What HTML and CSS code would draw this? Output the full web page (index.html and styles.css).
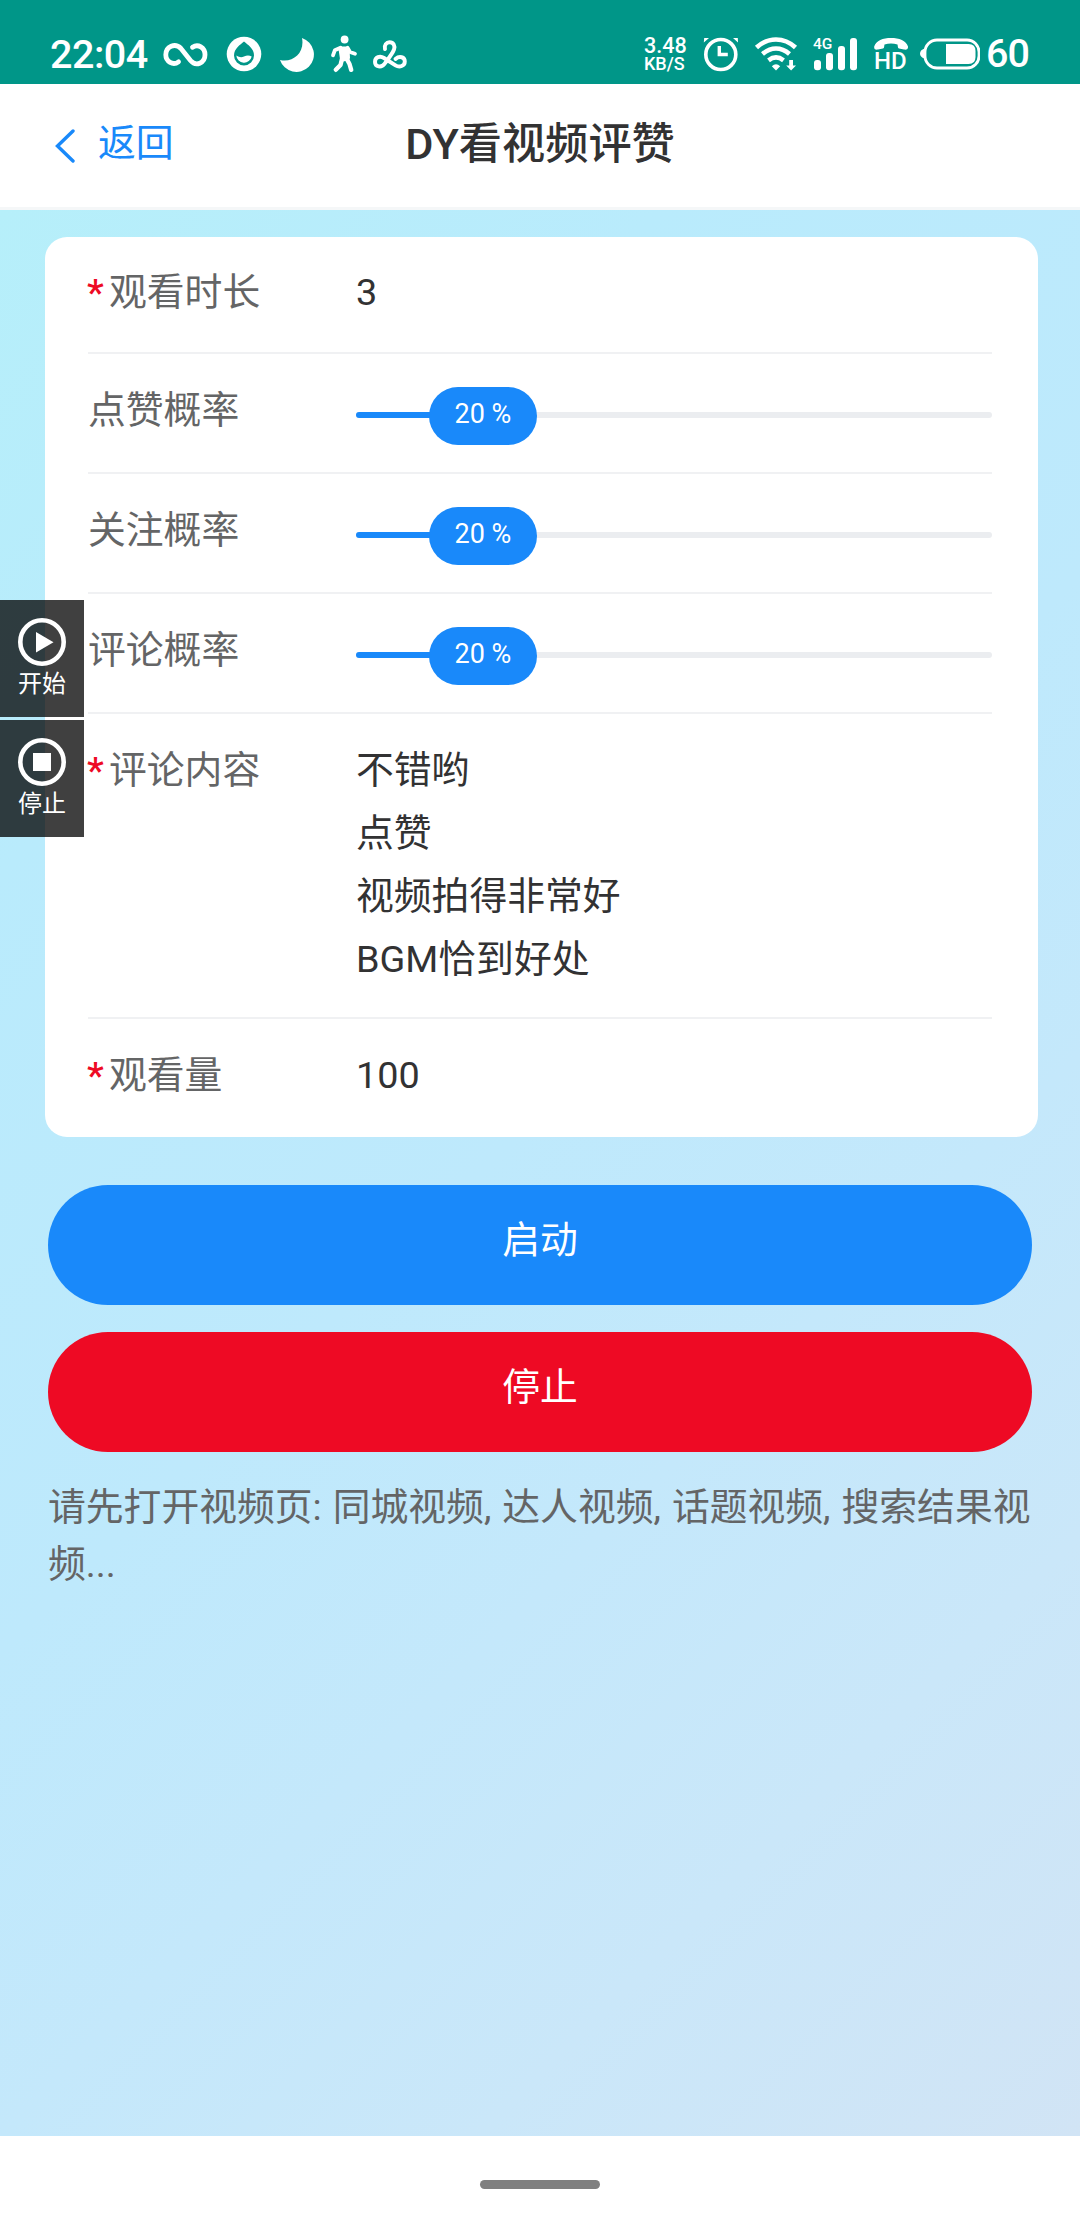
FILE: index.html
```html
<!DOCTYPE html>
<html lang="zh-CN">
<head>
<meta charset="utf-8">
<title>DY看视频评赞</title>
<link rel="stylesheet" href="styles.css">
</head>
<body>
<div class="status">
  <div class="status-left">
    <span class="clock">22:04</span>
    <svg class="i-inf" width="46" height="36" viewBox="162 36 46 36" fill="none" stroke="#fff" stroke-width="4.800" stroke-linecap="round"><path d="M178.500 61.800C173 66 165.800 61.500 165.800 54.800C165.800 46.500 175 42.500 181 48.500L190.500 60.500C196 67 205 63 205 54.800C205 47.500 198 43.500 192.500 47.300"/></svg>
    <svg class="i-drop" width="36" height="36" viewBox="225.500 36 36 36"><circle cx="243.500" cy="54" r="17.300" fill="#fff"/><path d="M243.500 41.500C247.500 45 253.500 48.500 253.500 55.500A10 10 0 0 1 233.500 55.500C233.500 48.500 239.500 45 243.500 41.500Z" fill="#009688"/><path d="M235.800 55.500C239 57.500 241 57.600 243.500 56.500C246.500 55 249 55.300 251.200 56.500A7.800 7.800 0 0 1 235.800 55.500Z" fill="#fff"/></svg>
    <svg class="i-moon" width="36" height="36" viewBox="279 36 36 36"><path d="M302 38A17.400 17.400 0 1 1 280 60C293 63 305 53 302 38Z" fill="#fff"/></svg>
    <svg class="i-walk" width="28" height="38" viewBox="330 35 28 38" fill="none" stroke="#fff" stroke-linecap="round" stroke-linejoin="round"><circle cx="344.600" cy="39.500" r="3.900" fill="#fff" stroke="none"/><path d="M341 49L347 49L347.500 58L342.500 59Z" fill="#fff" stroke-width="5"/><path d="M340.500 47.800L334.800 50.300L333 55.300M347.500 47.800L350 52L355 53.700" stroke-width="3.800"/><path d="M342 59L340.500 65L335.800 69.800M346.500 58.500L349.500 64L351.200 69.800" stroke-width="4.400"/></svg>
    <svg class="i-loop" width="36" height="34" viewBox="373 38 36 34" fill="none" stroke="#fff" stroke-width="3.900" stroke-linecap="round" stroke-linejoin="round"><path d="M386 49C385 45 387.500 42.300 390.500 42.300C394.500 42.300 396.300 46 395 49.500C393.300 54 389.500 58.500 385.500 63.800C382.500 68 376 67 376 62C376 57 381 55.500 385 58L396.500 65.300C400.500 67.800 405.800 66 405.800 61.500C405.800 57 400.500 55.500 396.500 59"/></svg>
  </div>
  <div class="status-right">
    <div class="rate"><span class="rate-n">3.48</span><span class="rate-u">KB/S</span></div>
    <svg class="i-alarm" width="36" height="36" viewBox="703 36 36 36" fill="none" stroke="#fff"><circle cx="720.800" cy="54.500" r="15" stroke-width="3.600"/><path d="M719.300 46V54.500H727.800" stroke-width="3.400"/><path d="M703.800 42.500L704.200 38H709ZM738 42.500L737.800 38H733Z" fill="#fff" stroke="none"/></svg>
    <svg class="i-wifi" width="44" height="36" viewBox="754 36 44 36" fill="none" stroke="#fff" stroke-width="4.600"><path d="M756.500 47.500C768 36.800 784 36.800 795.500 47.500M762.500 54C771 46.800 781 46.800 789.500 54M768.500 60.300C773.500 56.500 778.500 56.500 783.500 60.300"/><path d="M776 70.500L771.800 66.200Q776 62.500 780.200 66.200Z" fill="#fff" stroke="none"/><path d="M789.200 60H793V65.500H796L791.100 70.500L786.200 65.500H789.200Z" fill="#fff" stroke="none"/></svg>
    <div class="signal"><span class="net">4G</span><svg width="44" height="34" viewBox="814 37 44 34"><g fill="#fff"><rect x="814" y="60" width="7" height="10.300" rx="3"/><rect x="826" y="53" width="7" height="17.300" rx="3"/><rect x="838" y="46" width="7" height="24.300" rx="3"/><rect x="850" y="38" width="7" height="32.300" rx="3"/></g></svg></div>
    <div class="hd"><svg width="34" height="14" viewBox="874 37 34 14"><path d="M874.200 46.500C876 40.500 883 38 891 38C899 38 906.300 40.500 908 46.500C908.300 49.500 906 50 904 49.500L899 48.500C897.500 48 898 46 897.500 44.500Q891 42.500 884.500 44.500C884 46 884.500 48 883 48.500L878 49.500C876 50 873.800 49.500 874.200 46.500Z" fill="#fff"/></svg><span class="hd-t">HD</span></div>
    <svg class="i-bat" width="60" height="32" viewBox="920 38 60 32"><rect x="925" y="40" width="54" height="28" rx="12" fill="none" stroke="#fff" stroke-width="2.800"/><path d="M924.500 48.500V58.500Q920 57 920 53.500Q920 50 924.500 48.500Z" fill="#fff"/><path d="M946 44H968.500Q975.500 44 975.500 51V57Q975.500 64 968.500 64H946Z" fill="#fff"/></svg>
    <span class="pct">60</span>
  </div>
</div>

<header class="navbar">
  <div class="back"><svg width="20" height="34" viewBox="0 0 20 34" fill="none" stroke="#1989fa" stroke-width="3.400" stroke-linecap="round"><path d="M18 2L2.500 17L18 32"/></svg><span>返回</span></div>
  <h1 class="title">DY看视频评赞</h1>
</header>

<main class="page">
  <section class="card">
    <div class="cell first"><div class="label"><i class="req">*</i>观看时长</div><div class="value">3</div></div>
    <div class="cell slide"><div class="label">点赞概率</div><div class="slider"><div class="bar" style="width:20%"><div class="thumb">20 %</div></div></div></div>
    <div class="cell slide"><div class="label">关注概率</div><div class="slider"><div class="bar" style="width:20%"><div class="thumb">20 %</div></div></div></div>
    <div class="cell slide"><div class="label">评论概率</div><div class="slider"><div class="bar" style="width:20%"><div class="thumb">20 %</div></div></div></div>
    <div class="cell area"><div class="label"><i class="req">*</i>评论内容</div><div class="value">不错哟<br>点赞<br>视频拍得非常好<br>BGM恰到好处</div></div>
    <div class="cell last"><div class="label"><i class="req">*</i>观看量</div><div class="value">100</div></div>
  </section>
  <button class="btn primary">启动</button>
  <button class="btn danger">停止</button>
  <p class="hint">请先打开视频页: 同城视频, 达人视频, 话题视频, 搜索结果视频...</p>
</main>

<footer class="home"><div class="handle"></div></footer>

<aside class="float">
  <div class="fbtn"><svg width="48" height="48" viewBox="0 0 48 48"><circle cx="24" cy="24" r="21.700" fill="none" stroke="#fff" stroke-width="4.600"/><path d="M18 14V34.500L35.500 24.200Z" fill="#fff"/></svg><span>开始</span></div>
  <div class="fbtn"><svg width="48" height="48" viewBox="0 0 48 48"><circle cx="24" cy="24" r="21.700" fill="none" stroke="#fff" stroke-width="4.600"/><rect x="15" y="15" width="18" height="18" fill="#fff"/></svg><span>停止</span></div>
</aside>
</body>
</html>
```
FILE: styles.css
```css
* { box-sizing: border-box; }
body {
  margin: 0;
  width: 1080px;
  height: 2232px;
  display: flex;
  flex-direction: column;
  position: relative;
  overflow: hidden;
  font-family: Roboto, "Noto Sans CJK SC", sans-serif;
  font-size: 37.8px;
  color: #323233;
}
svg { display: block; flex: none; }

.status {
  height: 84px;
  padding: 24px 50px 0 50px;
  background: #009688;
  color: #fff;
  display: flex;
  justify-content: space-between;
  align-items: flex-start;
  font-weight: 500;
}
.status-left, .status-right { display: flex; align-items: center; height: 60px; }
.clock { font-size: 39.5px; letter-spacing: -.5px; width: 112px; line-height: 63px; white-space: nowrap; }
.i-drop { margin-left: 18px; }
.i-moon { margin-left: 17px; }
.i-walk { margin-left: 15px; }
.i-loop { margin-left: 14px; margin-top: 2px; }
.rate { width: 59px; display: flex; flex-direction: column; }
.rate-n { font-size: 21.6px; line-height: 19px; }
.rate-u { font-size: 18px; line-height: 17px; }
.i-wifi { margin-left: 15px; }
.signal { margin-left: 16px; position: relative; }
.net { position: absolute; left: -1px; top: 0; font-size: 15.5px; line-height: 14px; }
.hd { margin-left: 16px; width: 46px; display: flex; flex-direction: column; }
.hd-t { font-size: 24px; line-height: 21px; }
.pct { font-size: 39.500px; letter-spacing: -1px; line-height: 60px; margin-left: 6px; width: 44px; }

.navbar {
  height: 126px;
  background: #fff;
  display: grid;
  grid-template-columns: 1fr auto 1fr;
  border-bottom: 3px solid #f5f7f8;
  padding: 0 55px;
}
.back { display: flex; align-items: center; gap: 23px; color: #1989fa; height: 110px; }
.back svg { margin-top: 13px; }
.title { margin: 0; font-size: 43.2px; font-weight: 500; line-height: 121px; }

.page {
  height: 1926px;
  padding: 27px 42px 0 45px;
  background: linear-gradient(135deg, #b6effa 0%, #b9ebfc 22%, #bee9fc 48%, #c4e8fb 64%, #cae7f9 80%, #d1e4f5 100%);
}
.card {
  height: 900px;
  background: #fff;
  border-radius: 22px;
  padding: 0 46px 0 43px;
}
.cell { display: flex; border-bottom: 2px solid #f0f1f3; padding-top: 25px; line-height: 63px; }
.first { height: 117px; padding-top: 24px; }
.slide { height: 120px; }
.area { height: 305px; }
.last { height: 118px; border-bottom: 0; }
.label { width: 268px; color: #646566; }
.req { display: inline-block; width: 21px; margin-left: -1px; margin-right: 1px; font-style: normal; font-weight: 500; color: #ee0a24; }
.slider { width: 637px; height: 6px; margin-top: 33px; border-radius: 6px; background: #ebedf0; }
.bar { position: relative; height: 6px; border-radius: 6px; background: #1989fa; }
.thumb {
  position: absolute; right: -54px; top: -25px;
  width: 108px; height: 58px; border-radius: 29px;
  background: #1989fa; color: #fff;
  font-size: 27px; line-height: 55px; text-align: center;
}

.btn {
  display: block;
  width: 984px;
  height: 120px;
  margin: 48px 0 0 3px;
  border: 0;
  border-radius: 60px;
  padding: 0 0 17px;
  color: #fff;
  font: inherit;
}
.primary { background: #1989fa; }
.danger { background: #ee0a24; margin-top: 27px; }
.hint { margin: 27px 0 0 3px; width: 990px; color: #646566; line-height: 57px; word-spacing: 1.6px; }

.home { height: 96px; background: #fff; padding-top: 44px; }
.handle { width: 120px; height: 9px; margin: 0 auto; border-radius: 5px; background: #808080; }

.float { position: absolute; left: 0; top: 600px; display: grid; gap: 3px; }
.fbtn {
  width: 84px; height: 117px; padding-top: 18px;
  display: flex; flex-direction: column; align-items: center;
  background: rgba(0, 0, 0, .75); color: #fff;
  font-size: 24px; line-height: 36px;
}
```
